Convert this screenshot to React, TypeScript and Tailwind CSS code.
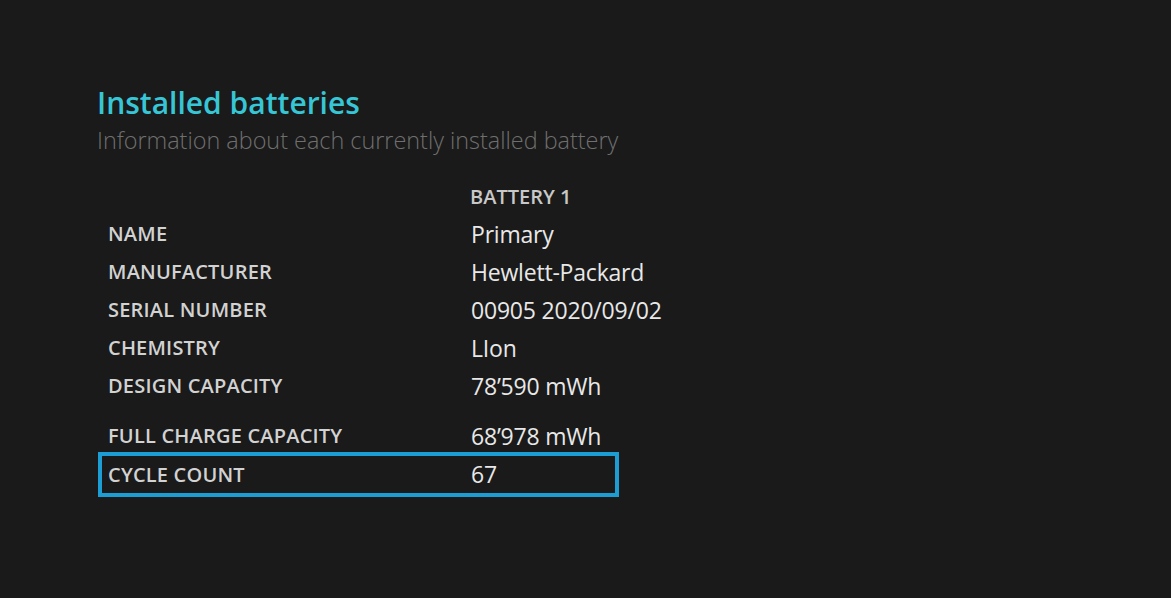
import React from "react";

const rows: [string, string][] = [
  ["NAME", "Primary"],
  ["MANUFACTURER", "Hewlett-Packard"],
  ["SERIAL NUMBER", "00905 2020/09/02"],
  ["CHEMISTRY", "LIon"],
  ["DESIGN CAPACITY", "78\u2019590 mWh"],
];

function Cells({ label, value }: { label: string; value: string }) {
  return (
    <>
      <div className="w-[363px] shrink-0 whitespace-nowrap text-[20px] font-semibold text-[#d2d2d2] tracking-[0.2px]">{label}</div>
      <div className="whitespace-nowrap text-[23px] text-[#e8e8e8] tracking-[-0.2px]">{value}</div>
    </>
  );
}

export default function App() {
  return (
    <div
      className="w-[1171px] h-[598px] bg-[#1a1a1a] overflow-hidden pl-[98px] pt-[85px]"
      style={{ fontFamily: '"Open Sans", "Noto Sans", sans-serif' }}
    >
      <div className="h-[36px] leading-[36px] text-[30px] font-semibold text-[#37c6d6] -ml-[1px] whitespace-nowrap">Installed batteries</div>
      <div className="mt-[4px] h-[30px] leading-[30px] text-[23.4px] font-light text-[#6f6f6f] -ml-[1px] whitespace-nowrap">
        Information about each currently installed battery
      </div>
      <div className="mt-[30px] mb-[6px] h-[24px] leading-[24px] pl-[372px] text-[20px] font-semibold text-[#c8c8c8] whitespace-nowrap">BATTERY 1</div>
      <div className="w-[521px]">
        {rows.map(([l, v]) => (
          <div key={l} className="flex items-center pl-[10px] h-[38px]">
            <Cells label={l} value={v} />
          </div>
        ))}
        <div className="flex items-center pl-[10px] h-[32px] mt-[15px]">
          <Cells label="FULL CHARGE CAPACITY" value={"68\u2019978 mWh"} />
        </div>
        <div className="h-[45px] border-4 border-[#1c9ed5] flex items-center pl-[6px]">
          <Cells label="CYCLE COUNT" value="67" />
        </div>
      </div>
    </div>
  );
}
